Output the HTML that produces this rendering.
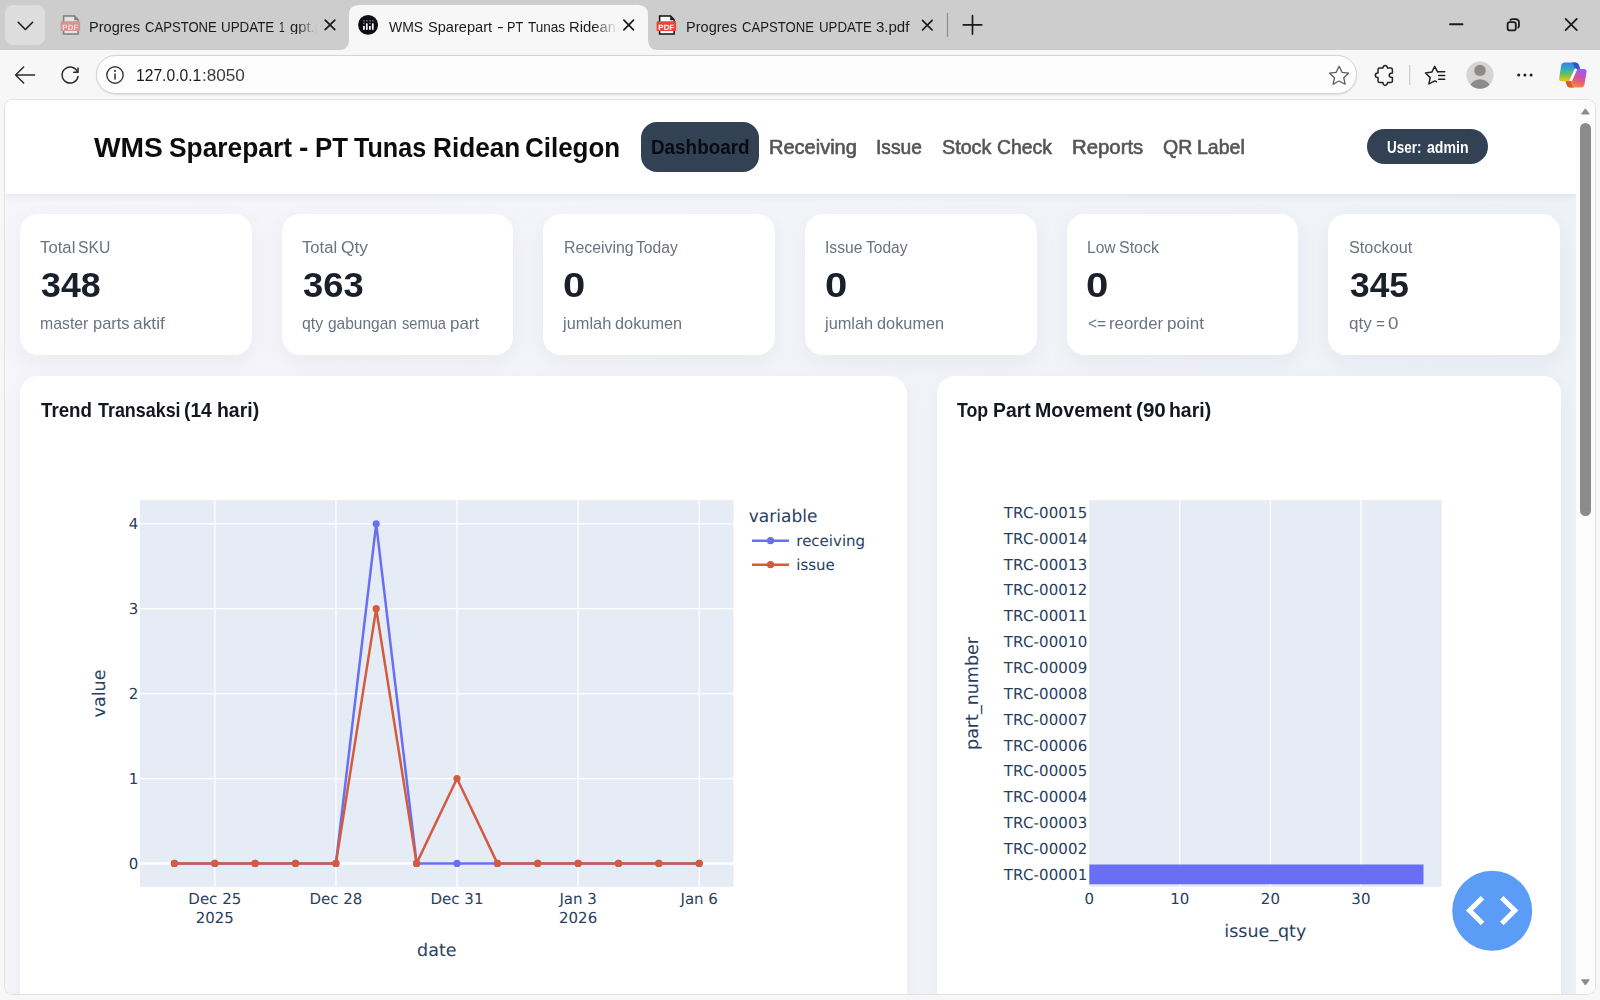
<!DOCTYPE html>
<html lang="id">
<head>
<meta charset="utf-8">
<title>WMS Sparepart - PT Tunas Ridean Cilegon</title>
<style>
*{box-sizing:border-box;margin:0;padding:0}
html,body{width:1600px;height:1000px;overflow:hidden;background:#f7f7f7;font-family:"Liberation Sans",sans-serif;}
.abs{position:absolute}
.t{position:absolute;white-space:nowrap;line-height:1;transform-origin:0 0;display:block}
#tabstrip{position:absolute;left:0;top:0;width:1600px;height:50px;background:#cdcdcd}
#toolbar{position:absolute;left:0;top:50px;width:1600px;height:50px;background:#f7f7f7}
#page{position:absolute;left:5px;top:100px;width:1590px;height:894px;border-radius:8px;background:linear-gradient(90deg,#f5f5fa 0%,#f3f4f9 55%,#eef2f7 100%);overflow:hidden;box-shadow:0 0 0 1px #e2e2e2}
#hdr{position:absolute;left:0;top:0;width:1571px;height:94px;background:#fff;box-shadow:0 2px 7px rgba(30,40,70,.075)}
.card{position:absolute;background:#fff;border-radius:18px;box-shadow:0 8px 24px rgba(30,41,80,.05)}
.kl{color:#6b7280}
.kv{font-weight:bold;color:#1b1f2a}
.ks{color:#6b7280}
.ct{font-weight:bold;color:#14171f}
.nav{font-weight:normal;color:#555;-webkit-text-stroke:.6px #555}
.tab{color:#1b1b1b}
svg{position:absolute;overflow:visible}
svg text{font-family:"DejaVu Sans","Liberation Sans",sans-serif;fill:#2a3f5f;text-rendering:geometricPrecision}
</style>
</head>
<body>
<!-- ===== browser tab strip ===== -->
<div id="tabstrip">
  <div class="abs" style="left:5px;top:5px;width:40px;height:40px;border-radius:8px;background:#dddddd"></div>
  <!-- active tab shape -->
  <svg style="left:0;top:0" width="1600" height="50" viewBox="0 0 1600 50">
    <path d="M339 50 Q349 50 349 40 L349 15 Q349 5 359 5 L638 5 Q648 5 648 15 L648 40 Q648 50 658 50 Z" fill="#f7f7f7"/>
    <!-- chevron in v-button -->
    <path d="M18.2 22.3 L25.4 29.5 L32.6 22.3" fill="none" stroke="#1a1a1a" stroke-width="1.6" stroke-linecap="round" stroke-linejoin="round"/>
    <!-- tab close X's -->
    <g stroke="#1a1a1a" stroke-width="1.5" stroke-linecap="round" fill="none">
      <path d="M325.2 20.1 l9.6 9.6 m0 -9.6 l-9.6 9.6" stroke-width="1.7"/>
      <path d="M623.9 20.2 l9.6 9.6 m0 -9.6 l-9.6 9.6" stroke-width="1.7"/>
      <path d="M922.5 20.4 l9.6 9.6 m0 -9.6 l-9.6 9.6" stroke-width="1.7"/>
      <!-- plus -->
      <path d="M963.3 24.9 h18.4 M972.5 15.7 v18.4" stroke-width="1.7"/>
      <!-- window controls -->
      <path d="M1450 24.2 h12.5" stroke-width="1.9"/>
      <path d="M1565.6 18.9 l11.2 11.2 m0 -11.2 l-11.2 11.2" stroke-width="1.8"/>
    </g>
    <g stroke="#1a1a1a" stroke-width="1.8" fill="none">
      <rect x="1507.6" y="22.2" width="8.2" height="8.2" rx="2.2"/>
      <path d="M1510.4 19.9 Q1511.2 19.1 1512.8 19.1 H1515.4 Q1519 19.1 1519 22.7 V25.3 Q1519 26.9 1518.2 27.6" stroke-linecap="round"/>
    </g>
    <path d="M947.5 13 V37" stroke="#8f8f8f" stroke-width="1.2"/>
    <!-- pdf icon tab1 (faded) -->
    <g opacity=".42" transform="translate(60.6 15)">
      <path d="M3 1 H14 L17.5 4.8 V19 H3 Z" fill="#fff" stroke="#111" stroke-width="1.5" stroke-linejoin="miter"/>
      <path d="M13.6 .4 V5.2 H18 Z" fill="#1c1c1c"/>
      <rect x="0" y="6.2" width="19.6" height="9.8" rx=".8" fill="#e2463f"/>
      <text x="9.8" y="14.6" text-anchor="middle" style="font-family:'Liberation Sans',sans-serif;font-size:7.8px;font-weight:bold;fill:#fff;letter-spacing:.2px">PDF</text>
    </g>
    <!-- pdf icon tab3 -->
    <g transform="translate(656.6 15)">
      <path d="M3 1 H14 L17.5 4.8 V19 H3 Z" fill="#fff" stroke="#111" stroke-width="1.5" stroke-linejoin="miter"/>
      <path d="M13.6 .4 V5.2 H18 Z" fill="#1c1c1c"/>
      <rect x="0" y="6.2" width="19.6" height="9.8" rx=".8" fill="#e2463f"/>
      <text x="9.8" y="14.6" text-anchor="middle" style="font-family:'Liberation Sans',sans-serif;font-size:7.8px;font-weight:bold;fill:#fff;letter-spacing:.2px">PDF</text>
    </g>
    <!-- favicon active tab -->
    <circle cx="368.1" cy="24.9" r="9.95" fill="#100e14"/>
    <g fill="#fff">
      <rect x="363.05" y="26" width="1.7" height="3.8"/>
      <rect x="365.95" y="23.4" width="1.7" height="6.4"/>
      <rect x="369.05" y="26" width="1.7" height="3.8"/>
      <rect x="371.95" y="23.4" width="1.7" height="6.4"/>
      <g opacity=".42">
        <rect x="363.05" y="20.2" width="1.7" height="1.3"/><rect x="363.05" y="22.9" width="1.7" height="1.3"/>
        <rect x="365.95" y="20.2" width="1.7" height="1.3"/>
        <rect x="369.05" y="20.2" width="1.7" height="1.3"/><rect x="369.05" y="22.9" width="1.7" height="1.3"/>
        <rect x="371.95" y="20.2" width="1.7" height="1.3"/>
      </g>
    </g>
  </svg>
</div>
<!-- ===== toolbar ===== -->
<div id="toolbar">
  <div class="abs" style="left:96px;top:5.4px;width:1261.3px;height:38.6px;border-radius:19.3px;background:#fdfdfd;border:1px solid #d4d4d4;box-shadow:0 1px 1.5px rgba(0,0,0,.10)"></div>
  <svg style="left:0;top:0" width="1600" height="50" viewBox="0 50 1600 50">
    <g fill="none" stroke="#2b2b2b" stroke-width="1.5" stroke-linecap="round" stroke-linejoin="round">
      <!-- back -->
      <path d="M15.6 75 H34.6 M23.6 67 L15.6 75 L23.6 83"/>
      <!-- refresh -->
      <path d="M77.6 72.2 A8 8 0 1 0 78 76.5"/>
      <path d="M78 68 V72.3 H73.7"/>
      <!-- info -->
      <circle cx="115" cy="75" r="8.2" stroke="#3a3a3a" stroke-width="1.4"/>
      <path d="M115 74 V79" stroke="#3a3a3a" stroke-width="1.6"/>
      <!-- star -->
      <path d="M1339.1 66.3 L1342 72.3 L1348.6 73.2 L1343.8 77.8 L1345.1 84.2 L1339.1 81 L1333.1 84.2 L1334.4 77.8 L1329.6 73.2 L1336.2 72.3 Z" stroke="#5c5c5c" stroke-width="1.3"/>
      <!-- puzzle / extensions -->
      <path d="M1379.6 68.1 H1382.9 A2.3 2.6999999999999997 0 1 1 1387.5 68.1 H1390.8 Q1392.4 68.1 1392.4 69.7 V73.0 A3.1999999999999997 2.3 0 1 0 1392.4 77.6 V80.9 Q1392.4 82.5 1390.8 82.5 H1387.5 A2.3 2.6999999999999997 0 1 1 1382.9 82.5 H1379.6 Q1378.0 82.5 1378.0 80.9 V77.6 A2.6999999999999997 2.3 0 1 1 1378.0 73.0 V69.7 Q1378.0 68.1 1379.6 68.1 Z" stroke="#222" stroke-width="1.5"/>
      <!-- favourites -->
      <path d="M1437.6 71.8 L1434.7 66.3 L1431.9 72 L1425.5 73 L1430.2 77.6 L1428.9 83.9 L1434.8 80.9 L1436.4 81.7" stroke="#222" stroke-width="1.5"/>
      <path d="M1437.6 71.8 H1444.7 M1438.6 75.5 H1444.7 M1438.6 79.3 H1444.7" stroke="#222" stroke-width="1.5"/>
    </g>
    <circle cx="115" cy="71" r="1.05" fill="#3a3a3a"/>
    <path d="M1409.7 65 V85" stroke="#cfcfcf" stroke-width="1.3"/>
    <!-- profile -->
    <circle cx="1480" cy="75.2" r="13.6" fill="#d6d4d2"/>
    <clipPath id="pc"><circle cx="1480" cy="75.2" r="13.6"/></clipPath>
    <circle cx="1480" cy="70.4" r="5.7" fill="#8d8b89"/>
    <ellipse cx="1480" cy="88.6" rx="10.6" ry="9.4" fill="#8d8b89" clip-path="url(#pc)"/>
    <!-- dots -->
    <g fill="#222"><circle cx="1518.7" cy="75" r="1.55"/><circle cx="1524.9" cy="75" r="1.55"/><circle cx="1531.1" cy="75" r="1.55"/></g>
    <!-- copilot -->
    <defs>
      <linearGradient id="cg1" x1="0" y1="0" x2="1" y2="1"><stop offset="0" stop-color="#2a7de1"/><stop offset=".5" stop-color="#1fb6d9"/><stop offset="1" stop-color="#3ac47d"/></linearGradient>
      <linearGradient id="cg2" x1="0" y1="0" x2="0" y2="1"><stop offset="0" stop-color="#3f7df0"/><stop offset=".3" stop-color="#35a5c8"/><stop offset=".6" stop-color="#5cc06a"/><stop offset=".9" stop-color="#d8c420"/><stop offset="1" stop-color="#e8c020"/></linearGradient>
      <linearGradient id="cg3" x1=".6" y1="0" x2=".3" y2="1"><stop offset="0" stop-color="#9a5bf0"/><stop offset=".45" stop-color="#d9509c"/><stop offset=".8" stop-color="#f0784a"/><stop offset="1" stop-color="#f59a4a"/></linearGradient>
    </defs>
    <g>
      <path d="M1561.3 64.7 Q1562.3 62.6 1564.8 62.6 L1575.5 62.6 Q1578.2 62.6 1579 65.2 L1580 69 L1576.6 69 Q1574.6 69 1573.9 71 L1570.9 79.6 Q1570.1 81.3 1568.1 81.3 L1562 81.3 Q1558.2 81.3 1559.3 77.5 Z" fill="url(#cg2)"/>
      <path d="M1571.6 62.6 L1575.5 62.6 Q1578.2 62.6 1579 65.2 L1580 69 L1576.6 69 Q1575.2 69 1574.4 69.9 Q1575.4 65.4 1571.6 62.6 Z" fill="#2b56c9"/>
      <path d="M1584.3 85.5 Q1583.3 87.6 1580.8 87.6 L1570.2 87.6 Q1567.5 87.6 1566.7 85 L1565.7 81.3 L1569.1 81.3 Q1571.1 81.3 1571.8 79.3 L1574.8 70.7 Q1575.6 69 1577.6 69 L1583.7 69 Q1587.5 69 1586.4 72.8 Z" fill="url(#cg3)"/>
      <path d="M1575.6 69.8 L1570.9 80.4" stroke="#fff" stroke-width="2.6" stroke-linecap="round"/>
      <path d="M1574.1 87.6 L1570.2 87.6 Q1567.5 87.6 1566.7 85 L1565.7 81.3 L1569.1 81.3 Q1570.5 81.3 1571.3 80.4 Q1570.3 84.8 1574.1 87.6 Z" fill="#d9572b"/>
    </g>
  </svg>
</div>
<!-- ===== page ===== -->
<div id="page"><div class="abs" style="left:-5px;top:-100px;width:1600px;height:1000px">
  <div class="abs" id="hdr" style="left:5px;top:100px"></div>
  <div class="abs" style="left:641px;top:122px;width:118px;height:49.5px;border-radius:16px;background:#334155"></div>
  <div class="abs" style="left:1367px;top:129px;width:121px;height:35px;border-radius:17.5px;background:#334155"></div>
  <!-- KPI cards -->
  <div class="card" style="left:20px;top:214px;width:231.6px;height:141px"></div>
  <div class="card" style="left:281.7px;top:214px;width:231.6px;height:141px"></div>
  <div class="card" style="left:543.4px;top:214px;width:231.6px;height:141px"></div>
  <div class="card" style="left:805px;top:214px;width:231.6px;height:141px"></div>
  <div class="card" style="left:1066.7px;top:214px;width:231.6px;height:141px"></div>
  <div class="card" style="left:1328.4px;top:214px;width:231.6px;height:141px"></div>
  <!-- chart cards -->
  <div class="card" style="left:20px;top:375.5px;width:886.5px;height:700px"></div>
  <div class="card" style="left:937px;top:375.5px;width:623.5px;height:700px"></div>
  <!-- scrollbar -->
  <div class="abs" style="left:1576px;top:100px;width:19px;height:894px;background:#fcfcfc"></div>
  <div class="abs" style="left:1580px;top:123px;width:11px;height:393px;border-radius:5.5px;background:#8b8b8b"></div>
  <svg style="left:1576px;top:100px" width="19" height="894" viewBox="1576 100 19 894">
    <path d="M1581.6 114 L1585.4 108.8 L1589.2 114 Z" fill="#8b8b8b" stroke="#8b8b8b" stroke-width="1" stroke-linejoin="round"/>
    <path d="M1581.6 979.8 L1585.4 985 L1589.2 979.8 Z" fill="#8b8b8b" stroke="#8b8b8b" stroke-width="1" stroke-linejoin="round"/>
  </svg>
</div></div>
<div id="txt">
<div class="ph"><span class="t tab" style="left:89.49px;top:19.91px;font-size:14.4px;transform:scaleX(1.0119);">Progres</span> <span class="t tab" style="left:144.96px;top:19.91px;font-size:14.4px;transform:scaleX(0.9099);">CAPSTONE</span> <span class="t tab" style="left:221.48px;top:19.91px;font-size:14.4px;transform:scaleX(0.9293);">UPDATE</span> <span class="t tab" style="left:278.88px;top:19.91px;font-size:14.4px;transform:scaleX(0.7187);">1</span> <span class="t tab" style="left:289.99px;top:19.91px;font-size:14.4px;transform:scaleX(1.0244);-webkit-mask-image:linear-gradient(90deg,#000 6.8px,transparent 26.4px);mask-image:linear-gradient(90deg,#000 6.8px,transparent 26.4px);">gpt.pdf</span></div>
<div class="ph"><span class="t tab" style="left:389.40px;top:19.91px;font-size:14.4px;transform:scaleX(0.9715);">WMS</span> <span class="t tab" style="left:428.14px;top:19.91px;font-size:14.4px;transform:scaleX(1.0154);">Sparepart</span> <span class="t tab" style="left:496.57px;top:19.91px;font-size:14.4px;transform:scaleX(1.3889);">-</span> <span class="t tab" style="left:506.63px;top:19.91px;font-size:14.4px;transform:scaleX(0.8821);">PT</span> <span class="t tab" style="left:527.72px;top:19.91px;font-size:14.4px;transform:scaleX(0.9409);">Tunas</span> <span class="t tab" style="left:569.47px;top:19.91px;font-size:14.4px;transform:scaleX(1.0315);-webkit-mask-image:linear-gradient(90deg,#000 23.8px,transparent 47.1px);mask-image:linear-gradient(90deg,#000 23.8px,transparent 47.1px);">Ridean</span></div>
<div class="ph"><span class="t tab" style="left:686.39px;top:19.91px;font-size:14.4px;transform:scaleX(1.0119);">Progres</span> <span class="t tab" style="left:741.86px;top:19.91px;font-size:14.4px;transform:scaleX(0.9118);">CAPSTONE</span> <span class="t tab" style="left:818.58px;top:19.91px;font-size:14.4px;transform:scaleX(0.9239);">UPDATE</span> <span class="t tab" style="left:875.98px;top:19.91px;font-size:14.4px;transform:scaleX(1.0434);">3.pdf</span></div>
<div class="ph"><span class="t tab" style="left:136.11px;top:67.31px;font-size:17.1px;transform:scaleX(0.9147);color:#1b1b1b;">127.0.0.1</span><span class="t tab" style="left:201.70px;top:67.31px;font-size:17.1px;transform:scaleX(1.0029);color:#3c3c3c;">:8050</span></div>
<div class="ph"><span class="t " style="left:93.75px;top:135.21px;font-size:26.8px;transform:scaleX(1.0519);font-weight:bold;color:#0d0d0f;">WMS</span> <span class="t " style="left:168.99px;top:135.21px;font-size:26.8px;transform:scaleX(0.9834);font-weight:bold;color:#0d0d0f;">Sparepart</span> <span class="t " style="left:299.12px;top:135.21px;font-size:26.8px;transform:scaleX(1.0536);font-weight:bold;color:#0d0d0f;">-</span> <span class="t " style="left:314.68px;top:135.21px;font-size:26.8px;transform:scaleX(0.9652);font-weight:bold;color:#0d0d0f;">PT</span> <span class="t " style="left:354.40px;top:135.21px;font-size:26.8px;transform:scaleX(0.9387);font-weight:bold;color:#0d0d0f;">Tunas</span> <span class="t " style="left:432.76px;top:135.21px;font-size:26.8px;transform:scaleX(0.9765);font-weight:bold;color:#0d0d0f;">Ridean</span> <span class="t " style="left:525.44px;top:135.21px;font-size:26.8px;transform:scaleX(0.9690);font-weight:bold;color:#0d0d0f;">Cilegon</span></div>
<div class="ph"><span class="t nav" style="left:650.73px;top:137.61px;font-size:19.4px;transform:scaleX(0.9729);color:#070b14;font-weight:bold;-webkit-text-stroke:0;">Dashboard</span></div>
<div class="ph"><span class="t nav" style="left:769.01px;top:137.61px;font-size:19.4px;transform:scaleX(1.0319);">Receiving</span></div>
<div class="ph"><span class="t nav" style="left:876.12px;top:137.61px;font-size:19.4px;transform:scaleX(0.9892);">Issue</span></div>
<div class="ph"><span class="t nav" style="left:941.74px;top:137.61px;font-size:19.4px;transform:scaleX(1.0172);">Stock</span> <span class="t nav" style="left:996.65px;top:137.61px;font-size:19.4px;transform:scaleX(0.9975);">Check</span></div>
<div class="ph"><span class="t nav" style="left:1072.24px;top:137.61px;font-size:19.4px;transform:scaleX(1.0493);">Reports</span></div>
<div class="ph"><span class="t nav" style="left:1163.15px;top:137.61px;font-size:19.4px;transform:scaleX(1.0057);">QR</span> <span class="t nav" style="left:1196.89px;top:137.61px;font-size:19.4px;transform:scaleX(1.0065);">Label</span></div>
<div class="ph"><span class="t " style="left:1386.85px;top:138.81px;font-size:16.2px;transform:scaleX(0.8303);font-weight:bold;color:#fff;">User:</span> <span class="t " style="left:1426.75px;top:138.81px;font-size:16.2px;transform:scaleX(0.8702);font-weight:bold;color:#fff;">admin</span></div>
<div class="ph"><span class="t kl" style="left:39.68px;top:239.61px;font-size:15.8px;transform:scaleX(1.0604);">Total</span> <span class="t kl" style="left:78.30px;top:239.61px;font-size:15.8px;transform:scaleX(0.9975);">SKU</span></div>
<div class="ph"><span class="t kv" style="left:40.84px;top:267.32px;font-size:35px;transform:scaleX(1.0215);">348</span></div>
<div class="ph"><span class="t ks" style="left:39.59px;top:315.81px;font-size:15.7px;transform:scaleX(1.0085);">master</span> <span class="t ks" style="left:92.70px;top:315.81px;font-size:15.7px;transform:scaleX(1.0494);">parts</span> <span class="t ks" style="left:133.09px;top:315.81px;font-size:15.7px;transform:scaleX(1.1069);">aktif</span></div>
<div class="ph"><span class="t kl" style="left:302.28px;top:239.61px;font-size:15.8px;transform:scaleX(1.0541);">Total</span> <span class="t kl" style="left:340.63px;top:239.61px;font-size:15.8px;transform:scaleX(1.0972);">Qty</span></div>
<div class="ph"><span class="t kv" style="left:302.63px;top:267.32px;font-size:35px;transform:scaleX(1.0390);">363</span></div>
<div class="ph"><span class="t ks" style="left:301.99px;top:315.81px;font-size:15.7px;transform:scaleX(1.0126);">qty</span> <span class="t ks" style="left:328.31px;top:315.81px;font-size:15.7px;transform:scaleX(0.9880);">gabungan</span> <span class="t ks" style="left:401.63px;top:315.81px;font-size:15.7px;transform:scaleX(0.9350);">semua</span> <span class="t ks" style="left:450.32px;top:315.81px;font-size:15.7px;transform:scaleX(1.0811);">part</span></div>
<div class="ph"><span class="t kl" style="left:563.69px;top:239.61px;font-size:15.8px;transform:scaleX(1.0046);">Receiving</span> <span class="t kl" style="left:636.20px;top:239.61px;font-size:15.8px;transform:scaleX(0.9914);">Today</span></div>
<div class="ph"><span class="t kv" style="left:563.00px;top:267.32px;font-size:35px;transform:scaleX(1.1414);">0</span></div>
<div class="ph"><span class="t ks" style="left:563.42px;top:315.81px;font-size:15.7px;transform:scaleX(1.0445);">jumlah</span> <span class="t ks" style="left:614.88px;top:315.81px;font-size:15.7px;transform:scaleX(1.0404);">dokumen</span></div>
<div class="ph"><span class="t kl" style="left:825.11px;top:239.61px;font-size:15.8px;transform:scaleX(0.9922);">Issue</span> <span class="t kl" style="left:865.70px;top:239.61px;font-size:15.8px;transform:scaleX(0.9854);">Today</span></div>
<div class="ph"><span class="t kv" style="left:824.65px;top:267.32px;font-size:35px;transform:scaleX(1.1443);">0</span></div>
<div class="ph"><span class="t ks" style="left:825.12px;top:315.81px;font-size:15.7px;transform:scaleX(1.0434);">jumlah</span> <span class="t ks" style="left:876.58px;top:315.81px;font-size:15.7px;transform:scaleX(1.0404);">dokumen</span></div>
<div class="ph"><span class="t kl" style="left:1087.07px;top:239.61px;font-size:15.8px;transform:scaleX(0.9866);">Low</span> <span class="t kl" style="left:1119.39px;top:239.61px;font-size:15.8px;transform:scaleX(1.0125);">Stock</span></div>
<div class="ph"><span class="t kv" style="left:1086.35px;top:267.32px;font-size:35px;transform:scaleX(1.1443);">0</span></div>
<div class="ph"><span class="t ks" style="left:1087.81px;top:315.81px;font-size:15.7px;transform:scaleX(0.9841);">&lt;=</span> <span class="t ks" style="left:1108.68px;top:315.81px;font-size:15.7px;transform:scaleX(1.0702);">reorder</span> <span class="t ks" style="left:1166.91px;top:315.81px;font-size:15.7px;transform:scaleX(1.0884);">point</span></div>
<div class="ph"><span class="t kl" style="left:1348.88px;top:239.61px;font-size:15.8px;transform:scaleX(1.0298);">Stockout</span></div>
<div class="ph"><span class="t kv" style="left:1349.95px;top:267.32px;font-size:35px;transform:scaleX(1.0092);">345</span></div>
<div class="ph"><span class="t ks" style="left:1348.95px;top:315.81px;font-size:15.7px;transform:scaleX(1.0861);">qty</span> <span class="t ks" style="left:1375.82px;top:315.81px;font-size:15.7px;transform:scaleX(0.9740);">=</span> <span class="t ks" style="left:1387.68px;top:315.81px;font-size:15.7px;transform:scaleX(1.1974);">0</span></div>
<div class="ph"><span class="t ct" style="left:40.81px;top:401.20px;font-size:19.8px;transform:scaleX(0.9463);">Trend</span> <span class="t ct" style="left:97.92px;top:401.20px;font-size:19.8px;transform:scaleX(0.9046);">Transaksi</span> <span class="t ct" style="left:184.13px;top:401.20px;font-size:19.8px;transform:scaleX(0.9709);">(14</span> <span class="t ct" style="left:216.82px;top:401.20px;font-size:19.8px;transform:scaleX(0.9825);">hari)</span></div>
<div class="ph"><span class="t ct" style="left:957.07px;top:401.20px;font-size:19.8px;transform:scaleX(0.8974);">Top</span> <span class="t ct" style="left:992.63px;top:401.20px;font-size:19.8px;transform:scaleX(0.9778);">Part</span> <span class="t ct" style="left:1034.71px;top:401.20px;font-size:19.8px;transform:scaleX(0.9894);">Movement</span> <span class="t ct" style="left:1136.06px;top:401.20px;font-size:19.8px;transform:scaleX(1.0444);">(90</span> <span class="t ct" style="left:1168.82px;top:401.20px;font-size:19.8px;transform:scaleX(0.9825);">hari)</span></div>
</div>
<!-- ===== charts ===== -->
<svg style="left:0;top:0" width="1600" height="994" viewBox="0 0 1600 994">
<rect x="140.0" y="500.2" width="593.5" height="386.59999999999997" fill="#e5ecf6"/>
<g stroke="#fff" stroke-width="1.25" fill="none">
<path d="M214.8 500.2 V886.8"/>
<path d="M335.9 500.2 V886.8"/>
<path d="M457.0 500.2 V886.8"/>
<path d="M578.1 500.2 V886.8"/>
<path d="M699.2 500.2 V886.8"/>
<path d="M140.0 778.5 H733.5"/>
<path d="M140.0 693.6 H733.5"/>
<path d="M140.0 608.7 H733.5"/>
<path d="M140.0 523.8 H733.5"/>
</g>
<path d="M140.0 863.4 H733.5" stroke="#fff" stroke-width="2.5"/>
<path d="M174.4 863.4 L214.8 863.4 L255.1 863.4 L295.5 863.4 L335.9 863.4 L376.2 523.8 L416.6 863.4 L457.0 863.4 L497.4 863.4 L537.7 863.4 L578.1 863.4 L618.5 863.4 L658.8 863.4 L699.2 863.4" fill="none" stroke="#686ff5" stroke-width="2.5" stroke-linejoin="round"/>
<g fill="#686ff5"><circle cx="174.4" cy="863.4" r="3.6"/><circle cx="214.8" cy="863.4" r="3.6"/><circle cx="255.1" cy="863.4" r="3.6"/><circle cx="295.5" cy="863.4" r="3.6"/><circle cx="335.9" cy="863.4" r="3.6"/><circle cx="376.2" cy="523.8" r="3.6"/><circle cx="416.6" cy="863.4" r="3.6"/><circle cx="457.0" cy="863.4" r="3.6"/><circle cx="497.4" cy="863.4" r="3.6"/><circle cx="537.7" cy="863.4" r="3.6"/><circle cx="578.1" cy="863.4" r="3.6"/><circle cx="618.5" cy="863.4" r="3.6"/><circle cx="658.8" cy="863.4" r="3.6"/><circle cx="699.2" cy="863.4" r="3.6"/></g>
<path d="M174.4 863.4 L214.8 863.4 L255.1 863.4 L295.5 863.4 L335.9 863.4 L376.2 608.7 L416.6 863.4 L457.0 778.5 L497.4 863.4 L537.7 863.4 L578.1 863.4 L618.5 863.4 L658.8 863.4 L699.2 863.4" fill="none" stroke="#d35c3f" stroke-width="2.5" stroke-linejoin="round"/>
<g fill="#d35c3f"><circle cx="174.4" cy="863.4" r="3.6"/><circle cx="214.8" cy="863.4" r="3.6"/><circle cx="255.1" cy="863.4" r="3.6"/><circle cx="295.5" cy="863.4" r="3.6"/><circle cx="335.9" cy="863.4" r="3.6"/><circle cx="376.2" cy="608.7" r="3.6"/><circle cx="416.6" cy="863.4" r="3.6"/><circle cx="457.0" cy="778.5" r="3.6"/><circle cx="497.4" cy="863.4" r="3.6"/><circle cx="537.7" cy="863.4" r="3.6"/><circle cx="578.1" cy="863.4" r="3.6"/><circle cx="618.5" cy="863.4" r="3.6"/><circle cx="658.8" cy="863.4" r="3.6"/><circle cx="699.2" cy="863.4" r="3.6"/></g>
<g font-size="15" text-anchor="end">
<text x="138.4" y="868.7">0</text>
<text x="138.4" y="783.8">1</text>
<text x="138.4" y="698.9">2</text>
<text x="138.4" y="614.0">3</text>
<text x="138.4" y="529.1">4</text>
</g>
<g font-size="15" text-anchor="middle">
<text x="214.8" y="903.8">Dec 25</text>
<text x="335.9" y="903.8">Dec 28</text>
<text x="457.0" y="903.8">Dec 31</text>
<text x="578.1" y="903.8">Jan 3</text>
<text x="699.2" y="903.8">Jan 6</text>
<text x="214.8" y="923.3">2025</text><text x="578.1" y="923.3">2026</text>
</g>
<text x="436.8" y="955.6" font-size="17.5" text-anchor="middle">date</text>
<text transform="translate(104.6 693.5) rotate(-90)" font-size="17.5" text-anchor="middle">value</text>
<text x="748.8" y="522" font-size="17.5" textLength="68.6" lengthAdjust="spacingAndGlyphs">variable</text>
<path d="M752 540.7 H789" stroke="#686ff5" stroke-width="2.5"/><circle cx="770.5" cy="540.7" r="3.6" fill="#686ff5"/>
<text x="796.3" y="545.9" font-size="15">receiving</text>
<path d="M752 564.7 H789" stroke="#d35c3f" stroke-width="2.5"/><circle cx="770.5" cy="564.7" r="3.6" fill="#d35c3f"/>
<text x="796.3" y="569.9" font-size="15">issue</text>
<rect x="1089.3" y="500.2" width="352.29999999999995" height="386.59999999999997" fill="#e5ecf6"/>
<g stroke="#fff" stroke-width="1.25" fill="none">
<path d="M1179.8 500.2 V886.8"/>
<path d="M1270.4 500.2 V886.8"/>
<path d="M1360.9 500.2 V886.8"/>
</g>
<rect x="1089.3" y="864.5" width="334.2" height="19.8" fill="#686ff5"/>
<g font-size="15" text-anchor="end">
<text x="1087.2" y="879.7" textLength="83.4" lengthAdjust="spacing">TRC-00001</text>
<text x="1087.2" y="853.9" textLength="83.4" lengthAdjust="spacing">TRC-00002</text>
<text x="1087.2" y="828.0" textLength="83.4" lengthAdjust="spacing">TRC-00003</text>
<text x="1087.2" y="802.2" textLength="83.4" lengthAdjust="spacing">TRC-00004</text>
<text x="1087.2" y="776.3" textLength="83.4" lengthAdjust="spacing">TRC-00005</text>
<text x="1087.2" y="750.5" textLength="83.4" lengthAdjust="spacing">TRC-00006</text>
<text x="1087.2" y="724.6" textLength="83.4" lengthAdjust="spacing">TRC-00007</text>
<text x="1087.2" y="698.8" textLength="83.4" lengthAdjust="spacing">TRC-00008</text>
<text x="1087.2" y="672.9" textLength="83.4" lengthAdjust="spacing">TRC-00009</text>
<text x="1087.2" y="647.1" textLength="83.4" lengthAdjust="spacing">TRC-00010</text>
<text x="1087.2" y="621.2" textLength="83.4" lengthAdjust="spacing">TRC-00011</text>
<text x="1087.2" y="595.4" textLength="83.4" lengthAdjust="spacing">TRC-00012</text>
<text x="1087.2" y="569.6" textLength="83.4" lengthAdjust="spacing">TRC-00013</text>
<text x="1087.2" y="543.7" textLength="83.4" lengthAdjust="spacing">TRC-00014</text>
<text x="1087.2" y="517.9" textLength="83.4" lengthAdjust="spacing">TRC-00015</text>
</g>
<g font-size="15" text-anchor="middle">
<text x="1089.3" y="903.8">0</text>
<text x="1179.8" y="903.8">10</text>
<text x="1270.4" y="903.8">20</text>
<text x="1360.9" y="903.8">30</text>
</g>
<text x="1265.3" y="937.2" font-size="17.5" text-anchor="middle">issue_qty</text>
<text transform="translate(978.3 693.5) rotate(-90)" font-size="17.5" text-anchor="middle">part_number</text>
<circle cx="1492.2" cy="910.8" r="40" fill="#5b9cf6"/>
<path d="M1482.5 897.7 L1469.5 910.6 L1482.5 923.5 M1501.8 897.7 L1514.8 910.6 L1501.8 923.5" fill="none" stroke="#fff" stroke-width="5" stroke-linejoin="miter"/>
</svg>
</body>
</html>
